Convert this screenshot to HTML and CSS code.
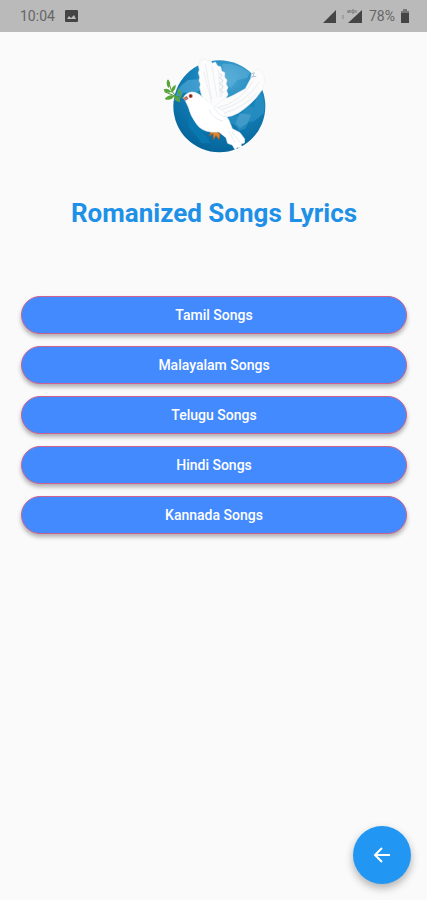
FILE: index.html
```html
<!DOCTYPE html>
<html lang="en">
<head>
  <meta charset="UTF-8" />
  <meta name="viewport" content="width=device-width, initial-scale=1.0" />
  <title>Romanized Songs Lyrics</title>
  <link rel="stylesheet" href="styles.css">
</head>
<body>
  <header class="status-bar">
    <div class="status-group">
      <span>10:04</span>
      <svg class="photo-icon" viewBox="0 0 13 12" aria-hidden="true">
        <rect width="13" height="12" rx="1" fill="#444" />
        <path d="M2 9l2-3 2 2 3-3 2 4z" fill="#bbb" />
      </svg>
    </div>
    <div class="status-group status-right">
      <svg class="signal-icons" viewBox="0 0 40 15" aria-hidden="true">
        <path d="M0 14L13 1v13z" fill="#444" />
        <path d="M20 6v4" stroke="#a0a0a0" stroke-width="2" />
        <path d="M25 14L39 1v13z" fill="#444" />
        <path d="M25 1v3l2-3v3M29 1h2v3h-2zM33 1v3" fill="none" stroke="#777" stroke-width="1" />
      </svg>
      <span>78%</span>
      <svg class="battery-icon" viewBox="0 0 8 14" aria-hidden="true">
        <path d="M2 0h4v2h2v12H0V2h2z" fill="#444" />
        <path d="M0 2h2V0h4v2h2v2H0z" fill="#777" />
      </svg>
    </div>
  </header>
  <main class="home">
    <svg class="logo" viewBox="-4 0 360 336" role="img" aria-label="White dove in front of a globe">
      <defs>
        <radialGradient id="globe" cx="0.6" cy="0.2" r="0.85">
          <stop offset="0" stop-color="#4aa5d2" />
          <stop offset="0.45" stop-color="#1683ba" />
          <stop offset="1" stop-color="#036298" />
        </radialGradient>
      </defs>
      <circle cx="192" cy="175" r="138" fill="url(#globe)" />
      <!-- continents -->
      <path d="M78 112l20-16 32-2 4 32-14 8-36 0-12 20-16 4q6-26 22-46z" fill="#56aeda" opacity="0.6" />
      <path d="M200 48q46-4 84 26l-8 16-30 6-20 24-18-18z" fill="#6bb9dd" opacity="0.45" />
      <path d="M100 206l20 2 28 26-4 20 22 30-26 2-22-28-18-22z" fill="#0a78b0" />
      <path d="M218 210l38-10 24-26 16 4 6-24 14-22q16 30 10 64l-30 24-16 2-10 20-20 6-6-12-20-14z" fill="#2c92c5" opacity="0.7" />
      <path d="M254 196l34 4-12 26-22 14-14-14z" fill="#6bb5da" opacity="0.4" />
      <!-- olive branch -->
      <path d="M27 131l34 14 24 4M38 97l10 30 14 18" fill="none" stroke="#4b9136" stroke-width="3" />
      <path d="M38 94q-10 12 2 26 10-12-2-26zM61 110q-16 8-13 24 15-8 13-24zM24 125q12-7 25 6-14 9-25-6zM28 153q13-16 29-9-11 17-29 9zM57 144q17 1 18 18-17 0-18-18zM68 121q13 9 9 26-14-10-9-26z" fill="#58a63a" />
      <!-- feet -->
      <path d="M168 248l-6 16 11-7 1 18 8-12 10 12 2-17-18-14z" fill="#dc8734" stroke="#93572a" stroke-width="2" />
      <!-- left wing -->
      <path d="M158 183l-19-39-6-26 2-9-4-12 2-9-4-14 3-8-3-16 5-7 0-10 9 5 5-8 9 10 8-4 6 10 9-4 7 12 9 2 3 13 9 5 0 14 7 8-3 12 6 10-4 10 4 12-5 8 3 8-9 28z" fill="#fcfcfd" stroke="#e8edf0" stroke-width="2" />
      <path d="M150 48l19 105M169 52l16 96M189 65l6 84M203 87l-4 59M145 70l24 92" fill="none" stroke="#eceff2" stroke-width="3" />
      <path d="M193 76l8 6-8 7 9 9-9 9 11 9-10 9 10 10" fill="none" stroke="#d5dde3" stroke-width="3" />
      <!-- right wing -->
      <path d="M172 179l26-21 36-16 36-20 16-30 4-20 14-8 14 6 8 12 2 18-8 26-18 24-17 17-16 14-20 14-20 9-22 3z" fill="#fcfcfd" stroke="#edf1f4" stroke-width="2" />
      <path d="M190 188q83-23 121-85M202 197q64-18 102-62M186 180q70-17 108-82" fill="none" stroke="#e8ecf0" stroke-width="3" />
      <path d="M285 79l12-5-4 12 10-1M288 90l6-7" fill="none" stroke="#8bb0c2" stroke-width="2" />
      <!-- body and tail -->
      <path d="M84 151q6-17 26-19 17 0 29 14l32 24 31 18 18 27 11 27 23 12 14 19-1 12-10 2 3 14-13-3-8 7-8-14-14-5-5-17-21-17-25 0q-29-4-43-25-17-22-24-50l-10-21z" fill="#fff" stroke="#edf0f4" stroke-width="2" />
      <path d="M174 176q19 31 43 31M161 185q14 29 42 34M220 249l20 35M229 250l25 33" fill="none" stroke="#eaedf3" stroke-width="3" />
      <path d="M94 143l-11 8 7 7 10-6z" fill="#bc7770" />
      <circle cx="106" cy="144" r="6" fill="#bc4739" />
      <circle cx="106" cy="144" r="3" fill="#5e2426" />
    </svg>
    <h1 class="title">Romanized Songs Lyrics</h1>
    <nav class="languages" aria-label="Song languages">
      <button class="language-btn" type="button">Tamil Songs</button>
      <button class="language-btn" type="button">Malayalam Songs</button>
      <button class="language-btn" type="button">Telugu Songs</button>
      <button class="language-btn" type="button">Hindi Songs</button>
      <button class="language-btn" type="button">Kannada Songs</button>
    </nav>
  </main>
  <button class="back-btn" type="button" aria-label="Back">
    <svg class="back-icon" viewBox="0 0 18 18" aria-hidden="true">
      <path d="M17 9H2M9 2L2 9l7 7" fill="none" stroke="#fff" stroke-width="2" />
    </svg>
  </button>
</body>
</html>
```

FILE: styles.css
```css
* {
  box-sizing: border-box;
}
body {
  min-height: 100vh;
  margin: 0;
  background: #fafafa;
  font-family: Roboto, sans-serif;
}
.status-bar {
  display: flex;
  align-items: center;
  justify-content: space-between;
  height: 32px;
  padding: 0 18px 0 20px;
  background: #bababa;
  color: #666;
  font-size: 14px;
}
.status-group {
  display: flex;
  align-items: center;
  gap: 10px;
}
.status-right {
  gap: 6px;
}
.photo-icon {
  width: 13px;
  height: 12px;
}
.signal-icons {
  width: 40px;
  height: 15px;
}
.battery-icon {
  width: 8px;
  height: 14px;
}
.home {
  display: flex;
  flex-direction: column;
  align-items: center;
  padding: 16px 20px 20px 21px;
}
.logo {
  width: 120px;
  height: 112px;
}
.title {
  margin: 37px 0 67px;
  color: #1e90e8;
  font-size: 26px;
  font-weight: 700;
  line-height: 32px;
}
.languages {
  display: flex;
  flex-direction: column;
  gap: 12px;
  width: 100%;
}
.language-btn {
  height: 38px;
  padding: 0 16px;
  background: #448aff;
  border: 1px solid #cb6290;
  border-radius: 19px;
  box-shadow: 0 3px 4px rgba(0,0,0,0.3);
  color: #fff;
  font-family: inherit;
  font-size: 14px;
  font-weight: 500;
  cursor: pointer;
}
.back-btn {
  position: fixed;
  right: 16px;
  bottom: 16px;
  display: flex;
  align-items: center;
  justify-content: center;
  width: 58px;
  height: 58px;
  padding: 0;
  background: #2196f3;
  border: none;
  border-radius: 50%;
  box-shadow: 0 4px 8px rgba(0,0,0,0.3);
  cursor: pointer;
}
.back-icon {
  width: 18px;
  height: 18px;
}
```
